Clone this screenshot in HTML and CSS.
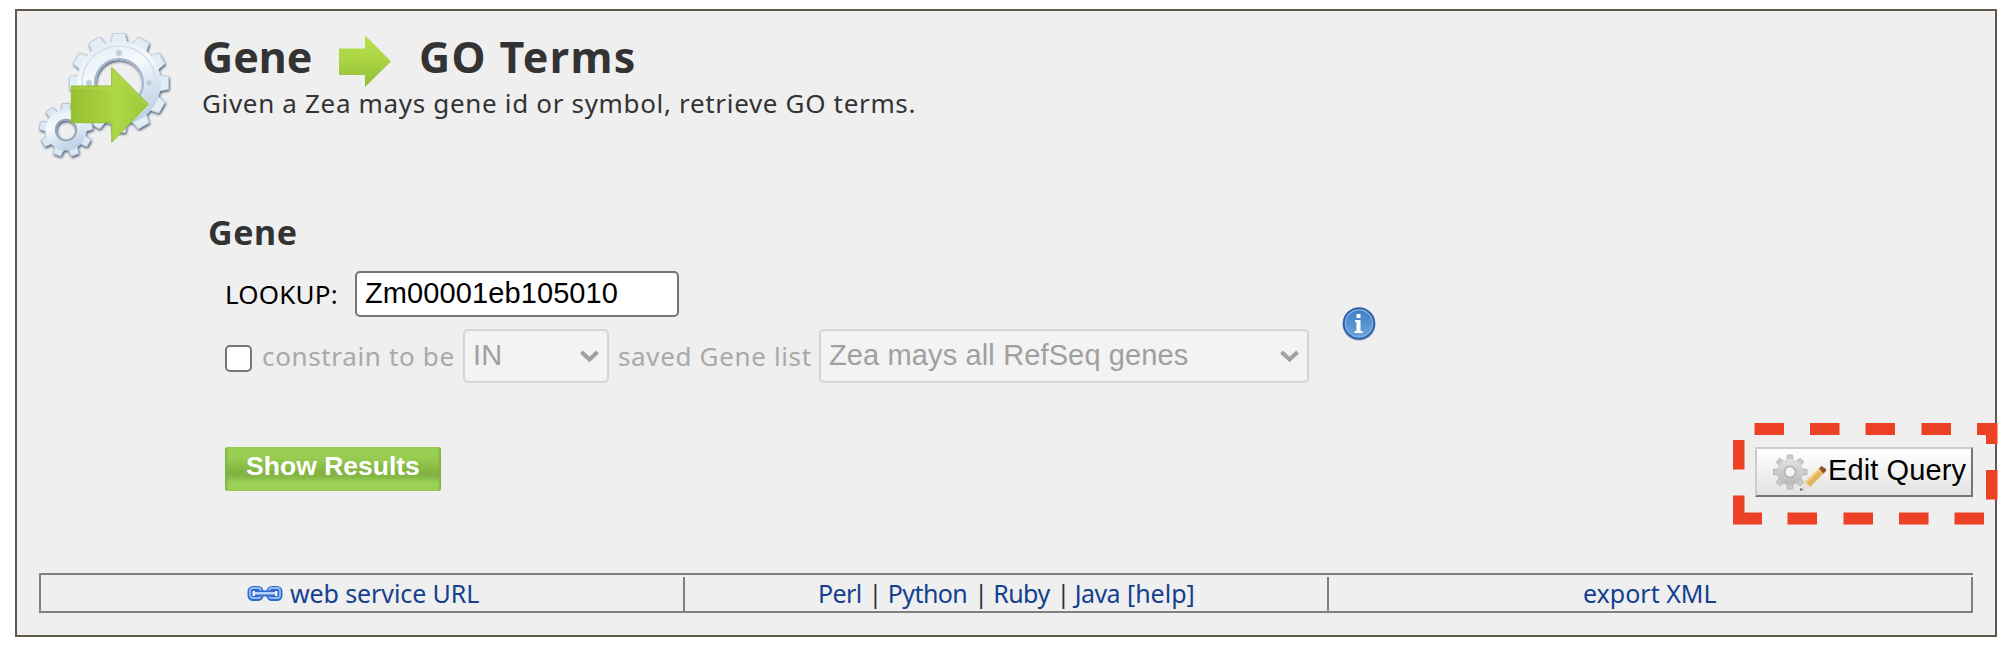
FILE: index.html
```html
<!DOCTYPE html>
<html lang="en">
<head>
<meta charset="utf-8">
<title>Gene to GO Terms</title>
<link rel="stylesheet" href="styles.css">
</head>
<body>
<main class="panel">
  <header class="header">
    <svg class="logo" viewBox="39 32 134 128" width="134" height="128">
      <defs>
        <linearGradient id="metal" x1="0" y1="0" x2="0.4" y2="1">
          <stop offset="0" stop-color="#dce9f4"/><stop offset="0.45" stop-color="#f6f9fc"/><stop offset="1" stop-color="#bfd2e6"/>
        </linearGradient>
        <linearGradient id="lime" x1="0" y1="0" x2="1" y2="0">
          <stop offset="0" stop-color="#98bf33"/><stop offset="0.6" stop-color="#add745"/><stop offset="1" stop-color="#9bc93b"/>
        </linearGradient>
        <filter id="soft" x="-20%" y="-20%" width="140%" height="140%">
          <feDropShadow dx="0.8" dy="1.5" stdDeviation="1" flood-color="#34475e" flood-opacity="0.9"/>
        </filter>
        <path id="tooth" d="M-8 -40 L-6.2 -49.5 H6.2 L8 -40Z"/>
        <path id="cog" d="M-4.8 -19 L-4 -26.5 H4 L4.8 -19Z"/>
      </defs>
      <g filter="url(#soft)">
        <g transform="translate(120 83)" fill="#e3edf6" stroke="#b9cbdd" stroke-width="0.8">
          <use href="#tooth"/><use href="#tooth" transform="rotate(30)"/><use href="#tooth" transform="rotate(60)"/><use href="#tooth" transform="rotate(90)"/><use href="#tooth" transform="rotate(120)"/><use href="#tooth" transform="rotate(150)"/><use href="#tooth" transform="rotate(180)"/><use href="#tooth" transform="rotate(210)"/><use href="#tooth" transform="rotate(240)"/><use href="#tooth" transform="rotate(270)"/><use href="#tooth" transform="rotate(300)"/><use href="#tooth" transform="rotate(330)"/>
          <path d="M0 -42 A42 42 0 1 1 0 42 A42 42 0 1 1 0 -42Z M0 -23 A23 23 0 1 0 0 23 A23 23 0 1 0 0 -23Z" fill="url(#metal)" stroke="none"/>
          <circle r="37" fill="none" stroke="#d3e0ec" stroke-width="1.5"/>
          <circle r="24" fill="none" stroke="#a2b6cb" stroke-width="2"/>
          <g fill="#bccbda" stroke="#d6e1eb"><circle cy="-30" r="3"/><circle cx="30" r="3"/><circle cx="-30" r="3"/></g>
        </g>
      </g>
      <g filter="url(#soft)">
        <g transform="translate(67 130)" fill="#dce8f4" stroke="#a9bfd6" stroke-width="0.8">
          <use href="#cog"/><use href="#cog" transform="rotate(40)"/><use href="#cog" transform="rotate(80)"/><use href="#cog" transform="rotate(120)"/><use href="#cog" transform="rotate(160)"/><use href="#cog" transform="rotate(200)"/><use href="#cog" transform="rotate(240)"/><use href="#cog" transform="rotate(280)"/><use href="#cog" transform="rotate(320)"/>
          <path d="M0 -20.5 A20.5 20.5 0 1 1 0 20.5 A20.5 20.5 0 1 1 0 -20.5Z M0 -9.5 A9.5 9.5 0 1 0 0 9.5 A9.5 9.5 0 1 0 0 -9.5Z" fill="url(#metal)" stroke="none"/>
          <circle r="10.3" fill="none" stroke="#8fa4bb" stroke-width="1.8"/>
        </g>
      </g>
      <path d="M72.3 86H112.7V67.3L149.5 104.3L112.7 142.3V122.7H72.3Z" fill="url(#lime)" stroke="#94bd35" stroke-width="1"/>
      <path d="M74.3 88H114.7V72L147 104.3" fill="none" stroke="#b6dc55" stroke-width="1"/>
    </svg>
    <div class="headings">
      <h1 class="title">
        <span class="title-from">Gene</span>
        <svg class="title-arrow" viewBox="0 0 52 52" width="52" height="52">
          <defs><linearGradient id="arrow" x1="0" y1="0" x2="0" y2="1"><stop offset="0" stop-color="#b9e14b"/><stop offset="0.45" stop-color="#acd645"/><stop offset="1" stop-color="#8fbc37"/></linearGradient></defs>
          <path d="M0 13.5H26V0L52 26.5L26 52V40H0Z" fill="url(#arrow)"/>
        </svg>
        <span class="title-to">GO Terms</span>
      </h1>
      <p class="subtitle">Given a Zea mays gene id or symbol, retrieve GO terms.</p>
    </div>
  </header>

  <section class="query">
    <h2 class="query-title">Gene</h2>
    <div class="query-body">
      <div class="query-fields">
        <div class="lookup">
          <label class="lookup-label" for="gene">LOOKUP:</label>
          <input class="lookup-input" id="gene" type="text" value="Zm00001eb105010">
        </div>
        <div class="constraint">
          <input class="check" type="checkbox" aria-label="constrain">
          <span class="text-constrain">constrain to be</span>
          <div class="select select-op">IN
            <svg class="chevron" viewBox="0 0 19 12" width="19" height="12"><path d="M1.5 2L9.5 9.5L17.5 2"/></svg>
          </div>
          <span class="text-saved">saved Gene list</span>
          <div class="select select-list">Zea mays all RefSeq genes
            <svg class="chevron" viewBox="0 0 19 12" width="19" height="12"><path d="M1.5 2L9.5 9.5L17.5 2"/></svg>
          </div>
        </div>
      </div>
      <svg class="info" viewBox="0 0 34 34" width="34" height="34">
        <defs><linearGradient id="blue" x1="0" y1="0" x2="0" y2="1"><stop offset="0" stop-color="#3f7cc4"/><stop offset="1" stop-color="#6ba5dc"/></linearGradient></defs>
        <circle cx="17" cy="17.3" r="16.5" fill="#b9bcc2"/>
        <circle cx="17" cy="16.5" r="16.3" fill="#2f62ae"/>
        <circle cx="17" cy="16.5" r="13.6" fill="url(#blue)" stroke="#85b2e2" stroke-width="1.3"/>
        <path d="M14.500 7H18.500V11H14.500Z M13 13H18.500V24H20.500V26H12.500V24H14.500V15H13Z" fill="#fff"/>
      </svg>
    </div>
  </section>

  <div class="actions">
    <button class="show">Show Results</button>
    <button class="edit">
      <svg class="edit-icon" viewBox="0 0 54 40" width="54" height="40">
        <defs><path id="nub" d="M-3.300 -11L-2.500 -17H2.500L3.300 -11Z"/>
        <linearGradient id="grey" x1="0" y1="0" x2="0" y2="1"><stop offset="0" stop-color="#e2e2e2"/><stop offset="1" stop-color="#b8b8b8"/></linearGradient></defs>
        <g transform="translate(17 18)" fill="#cacaca" stroke="#a8a8a8" stroke-width="0.7">
          <use href="#nub"/><use href="#nub" transform="rotate(45)"/><use href="#nub" transform="rotate(90)"/><use href="#nub" transform="rotate(135)"/><use href="#nub" transform="rotate(180)"/><use href="#nub" transform="rotate(225)"/><use href="#nub" transform="rotate(270)"/><use href="#nub" transform="rotate(315)"/>
          <circle r="13" fill="url(#grey)" stroke="none"/>
          <circle r="5.500" fill="#f3f3f3" stroke="#b0b0b0" stroke-width="1.500"/>
        </g>
        <path d="M32 28L46.500 14L51 19L37 33Z" fill="#e6b45c"/>
        <path d="M32 28L46.500 14L48 15.500L33.500 29.700Z" fill="#f3cf85"/>
        <path d="M46 14.500L48.500 12L53 15V17L50.500 19.500Z" fill="#8f5029"/>
        <path d="M32 28L37 33L29.500 36Z" fill="#e9e0cf"/>
        <path d="M27 34L31 35.500L27 37Z" fill="#777"/>
      </svg>
      <span>Edit Query</span>
    </button>
    <svg class="highlight" viewBox="0 0 266 102" width="266" height="102">
      <g fill="#ec4125">
        <path d="M21.500 0H51V12H21.500Z M77 0H106.500V12H77Z M132.500 0H162V12H132.500Z M188.500 0H218V12H188.500Z M244 0H264.500V21H253V12H244Z"/>
        <path d="M0 17H11.500V46.500H0Z M0 72.500H11.500V89.500H29V101.500H0Z M253 47H264.500V76.500H253Z"/>
        <path d="M54.500 89.500H84V101.500H54.500Z M110.500 89.500H140V101.500H110.500Z M166 89.500H195.500V101.500H166Z M221.500 89.500H251V101.500H221.500Z"/>
      </g>
    </svg>
  </div>

  <footer class="links">
    <div class="cell cell-url">
      <svg class="chain" viewBox="0 0 36 18" width="36" height="18">
        <g fill="none" stroke="#3268cc" stroke-width="5"><rect x="3" y="3.500" width="11" height="10" rx="3"/><rect x="22" y="3.500" width="11" height="10" rx="3"/></g>
        <g fill="none" stroke="#8ebcfa" stroke-width="1.800"><rect x="3" y="3" width="11" height="10" rx="3"/><rect x="22" y="3" width="11" height="10" rx="3"/></g>
        <path d="M8 8.500H28" stroke="#3268cc" stroke-width="6"/><path d="M8 8.300H28" stroke="#b9d6fb" stroke-width="2.500"/>
      </svg>
      <a class="url">web service URL</a>
    </div>
    <div class="cell cell-code"><a>Perl</a><i>|</i><a>Python</a><i>|</i><a>Ruby</a><i class="tight">|</i><a>Java</a><a class="help">[help]</a></div>
    <div class="cell cell-xml"><a>export XML</a></div>
  </footer>
</main>
</body>
</html>
```
FILE: styles.css
```css
* { box-sizing: border-box; }
body { margin: 0; background: #fff; color: #333; font-family: "Noto Sans", "Open Sans", sans-serif; font-size: 26px; white-space: nowrap; }
h1, h2, p { margin: 0; }
svg { display: block; flex: none; }

.panel { margin: 9px 17px 0 15px; height: 628px; border: 2px solid #615850; background: #efefef; padding: 21px 22px 0; }

.header { display: flex; height: 180px; }
.logo { margin: 0 30px 0 -1px; }
.title { display: flex; height: 48px; line-height: 49px; font-size: 43px; font-weight: 700; }
.title-from { width: 137px; }
.title-to { letter-spacing: 1.4px; }
.title-arrow { margin: 3px 28px 0 0; }
.subtitle { margin-top: 6px; line-height: 34px; letter-spacing: 0.67px; }

.query { padding-left: 169px; }
.query-title { line-height: 40px; font-size: 34px; font-weight: 700; letter-spacing: 0.6px; }
.query-body { display: flex; margin: 19px 0 0 17px; }
.lookup { display: flex; height: 46px; line-height: 46px; color: #000; }
.lookup-label { width: 130px; letter-spacing: 0.2px; }
.lookup-input { width: 324px; height: 46px; border: 2px solid #767676; border-radius: 5px; background: #fff; padding: 0 8px 2px; font: 29px "Liberation Sans", Arial, sans-serif; letter-spacing: 0.1px; color: #000; }
.constraint { display: flex; height: 54px; margin-top: 12px; line-height: 54px; color: #a9a9a9; letter-spacing: 0.65px; }
.check { appearance: none; width: 27px; height: 27px; margin: 16px 10px 0 0; border: 2px solid #767676; border-radius: 5px; background: #fff; }
.text-constrain { width: 201px; }
.text-saved { width: 201px; }
.select { display: flex; justify-content: space-between; height: 54px; border: 2px solid #d5d5d5; border-radius: 5px; background: #f3f3f3; color: #a0a0a0; line-height: 49px; font-family: "Liberation Sans", Arial, sans-serif; font-size: 29px; letter-spacing: 0.13px; padding: 0 8px 0 8px; }
.select-op { width: 146px; margin-right: 9px; }
.select-list { width: 490px; }
.chevron { margin-top: 19px; fill: none; stroke: #a0a0a0; stroke-width: 4; }
.info { margin: 36px 0 0 33px; }

.actions { position: relative; display: flex; justify-content: space-between; margin: 64px 0 0 186px; height: 50px; }
.show { width: 216px; height: 44px; border: 0; border-radius: 3px; padding: 0 0 5px; background: linear-gradient(#99d051 0%, #97cc50 25%, #82b242 58%, #86b845 68%, #9bd056 80%, #9bd056 100%); box-shadow: inset 3px 0 2px -1px #82b443, inset -3px 0 2px -1px #82b443; color: #fff; font: 700 26.5px "Liberation Sans", Arial, sans-serif; }
.edit { display: flex; width: 218px; height: 50px; border: 2px solid; border-color: #ccc #767676 #767676 #ccc; padding: 0 0 0 16px; background: linear-gradient(#fff, #e2e2e2); color: #000; font: 29px/43px "Liberation Sans", Arial, sans-serif; letter-spacing: 0.1px; }
.edit-icon { margin: 5px 1px 0 0; }
.highlight { position: absolute; right: -26px; top: -24px; }

.links { display: grid; grid-template-columns: 644px 644px 1fr; height: 40px; margin-top: 76px; border: 2px solid #808080; border-right: 0; font-size: 25px; padding-top: 2px; }
.cell { display: flex; border-right: 2px solid #808080; color: #14408f; height: 34px; line-height: 32px; }
.chain { margin: 8px 7px 0 0; }
.url { letter-spacing: -0.1px; }
.cell-url { padding-left: 206px; }
.cell-code { padding-left: 133px; letter-spacing: -0.6px; }
.cell-xml { padding-left: 254px; }
.cell i { font-style: normal; color: #333; margin: 0 6px 0 7px; }
.cell i.tight { margin-right: 5px; }
.help { margin-left: 7px; letter-spacing: 0; }
```
